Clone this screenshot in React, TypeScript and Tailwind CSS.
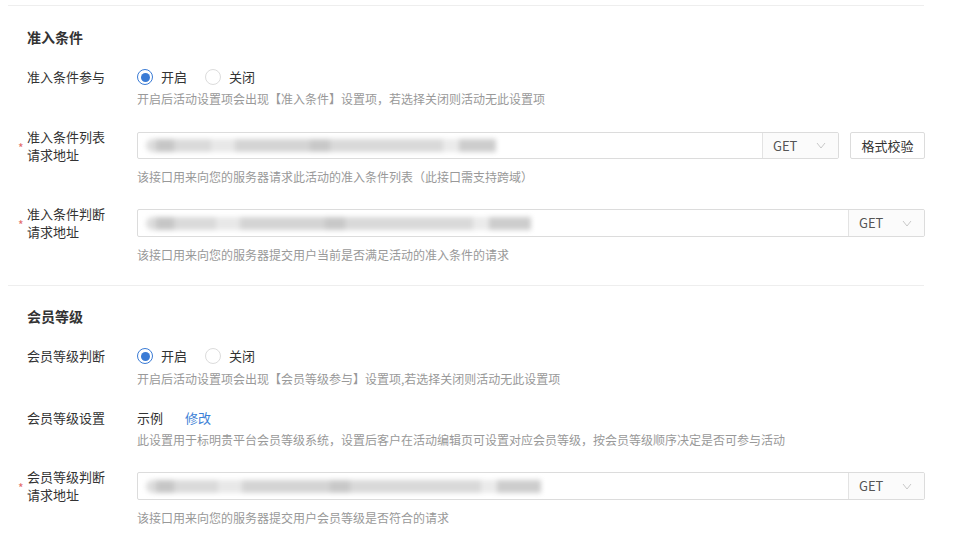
const font = { fontFamily: '"Noto Sans CJK SC", "Noto Sans", sans-serif' };

function Radio({ checked, label }: { checked?: boolean; label: string }) {
  return (
    <label className="flex items-center">
      <span
        className={
          checked
            ? "flex h-[16px] w-[16px] items-center justify-center rounded-full border border-[#3a7bd5] bg-white"
            : "flex h-[16px] w-[16px] items-center justify-center rounded-full border border-[#dcdcdc] bg-white"
        }
      >
        {checked && <span className="h-[9px] w-[9px] rounded-full bg-[#3a7bd5]" />}
      </span>
      <span className="ml-[8px] text-[13px] text-[#333]">{label}</span>
    </label>
  );
}

function Blur({ width }: { width: number }) {
  return (
    <div className="flex h-[13px] items-center blur-[2.5px]" style={{ width }}>
      <div className="h-full w-[10px] rounded-l-full bg-[#dcdcdc]" />
      <div className="h-full w-[18px] bg-[#c6c6c6]" />
      <div className="h-full flex-1 bg-[#dadada]" />
      <div className="h-full w-[24px] bg-[#e8e8e8]" />
      <div className="h-full flex-[2] bg-[#d4d4d4]" />
      <div className="h-full w-[20px] bg-[#c8c8c8]" />
      <div className="h-full flex-[3] bg-[#d9d9d9]" />
      <div className="h-full w-[16px] bg-[#ebebeb]" />
      <div className="h-full flex-1 bg-[#cdcdcd]" />
    </div>
  );
}

function Label({ lines, required }: { lines: string[]; required?: boolean }) {
  return (
    <div className="relative flex h-full w-[137px] shrink-0 flex-col justify-center pl-[27px] text-[13px] leading-[18px] text-[#333]">
      {required && (
        <span className="absolute left-[18px] top-[50%] -translate-y-[2px] text-[12px] leading-[8px] text-[#e36c6c]">
          *
        </span>
      )}
      {lines.map((l) => (
        <div key={l} className="whitespace-nowrap">
          {l}
        </div>
      ))}
    </div>
  );
}

function Help({ children, mt }: { children: string; mt: string }) {
  return (
    <div className={`${mt} whitespace-nowrap pl-[137px] text-[12px] leading-[18px] text-[#999]`}>{children}</div>
  );
}

function UrlInput({ blur, check }: { blur: number; check?: boolean }) {
  return (
    <div className="flex h-full flex-1 items-center">
      <div className="flex h-full flex-1 overflow-hidden rounded-[2px] border border-[#dcdcdc] bg-white">
        <div className="flex flex-1 items-center pl-[8px]">
          <Blur width={blur} />
        </div>
        <div className="flex w-[76px] items-center justify-between border-l border-[#e3e3e3] bg-[#fbfbfb] pl-[10px] pr-[12px] text-[13px] text-[#555]">
          <span>GET</span>
          <svg width="10" height="7" viewBox="0 0 10 7" fill="none">
            <path d="M1 1l4 5 4-5" stroke="#c8c8c8" strokeWidth="1" />
          </svg>
        </div>
      </div>
      {check && (
        <button className="ml-[11px] h-full w-[75px] rounded-[2px] border border-[#dcdcdc] bg-white text-[13px] text-[#333]">
          格式校验
        </button>
      )}
    </div>
  );
}

export default function App() {
  return (
    <div className="h-[537px] w-[958px] overflow-hidden bg-white" style={font}>
      <div className="h-[5px]" />
      <div className="ml-[8px] w-[916px] border-t border-[#eeeeee]" />

      <div className="mt-[21px] pl-[27px] text-[14px] font-bold leading-[20px] text-[#333]">准入条件</div>

      <div className="mt-[20px] flex h-[20px] items-center">
        <Label lines={["准入条件参与"]} />
        <div className="flex items-center gap-[18px]">
          <Radio checked label="开启" />
          <Radio label="关闭" />
        </div>
      </div>
      <Help mt="mt-[3px]">开启后活动设置项会出现【准入条件】设置项，若选择关闭则活动无此设置项</Help>

      <div className="mt-[24px] flex h-[27px] w-[925px] items-center">
        <Label lines={["准入条件列表", "请求地址"]} required />
        <UrlInput blur={350} check />
      </div>
      <Help mt="mt-[9px]">该接口用来向您的服务器请求此活动的准入条件列表（此接口需支持跨域）</Help>

      <div className="mt-[23px] flex h-[28px] w-[925px] items-center">
        <Label lines={["准入条件判断", "请求地址"]} required />
        <UrlInput blur={385} />
      </div>
      <Help mt="mt-[9px]">该接口用来向您的服务器提交用户当前是否满足活动的准入条件的请求</Help>

      <div className="ml-[8px] mt-[21px] w-[916px] border-t border-[#eeeeee]" />

      <div className="mt-[20px] pl-[27px] text-[14px] font-bold leading-[20px] text-[#333]">会员等级</div>

      <div className="mt-[20px] flex h-[20px] items-center">
        <Label lines={["会员等级判断"]} />
        <div className="flex items-center gap-[18px]">
          <Radio checked label="开启" />
          <Radio label="关闭" />
        </div>
      </div>
      <Help mt="mt-[4px]">开启后活动设置项会出现【会员等级参与】设置项,若选择关闭则活动无此设置项</Help>

      <div className="mt-[20px] flex h-[20px] items-center">
        <Label lines={["会员等级设置"]} />
        <div className="flex items-center gap-[22px] text-[13px]">
          <span className="text-[#333]">示例</span>
          <span className="text-[#3d7fd6]">修改</span>
        </div>
      </div>
      <Help mt="mt-[3px]">此设置用于标明贵平台会员等级系统，设置后客户在活动编辑页可设置对应会员等级，按会员等级顺序决定是否可参与活动</Help>

      <div className="mt-[23px] flex h-[28px] w-[925px] items-center">
        <Label lines={["会员等级判断", "请求地址"]} required />
        <UrlInput blur={395} />
      </div>
      <Help mt="mt-[9px]">该接口用来向您的服务器提交用户会员等级是否符合的请求</Help>
    </div>
  );
}
